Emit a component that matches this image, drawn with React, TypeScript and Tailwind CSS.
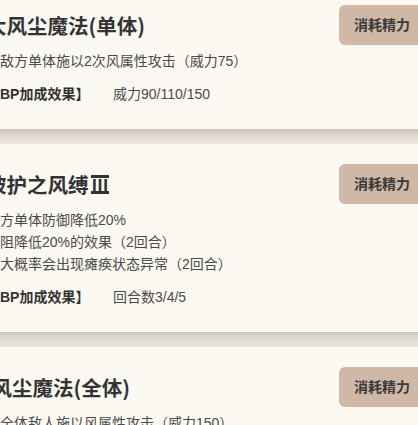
import React from "react";

type Card = {
  title: string;
  suffix?: string;
  titleShift?: boolean;
  lines: string[];
  bpValue: string;
};

const cards: Card[] = [
  {
    title: "大风尘魔法(单体)",
    lines: ["对敌方单体施以2次风属性攻击（威力75）"],
    bpValue: "威力90/110/150",
  },
  {
    title: "披护之风缚",
    suffix: "Ⅲ",
    lines: [
      "敌方单体防御降低20%",
      "风阻降低20%的效果（2回合）",
      "有大概率会出现瘫痪状态异常（2回合）",
    ],
    bpValue: "回合数3/4/5",
  },
  {
    title: "大风尘魔法(全体)",
    titleShift: true,
    lines: ["对全体敌人施以风属性攻击（威力150）"],
    bpValue: "威力180/220/300",
  },
];

const titleFont = { fontFamily: '"Noto Sans CJK SC", "Liberation Sans", sans-serif' };

function SkillCard({ card }: { card: Card }) {
  return (
    <div className="bg-[#fcf9f3] px-5 pt-5 pb-6">
      <div className="flex h-10 items-center justify-between">
        <div
          style={titleFont}
          className={
            card.titleShift
              ? "-ml-[15px] flex items-center text-[20.5px] font-bold leading-none text-[#333333]"
              : "flex items-center text-[20.5px] font-bold leading-none text-[#333333]"
          }
        >
          <span>{card.title}</span>
          {card.suffix && (
            <span className="ml-[2px] inline-block border-y-[3px] border-[#333333] px-[1px] text-[17px] leading-[13px] tracking-[-1px]">
              {card.suffix}
            </span>
          )}
        </div>
        <div className="flex h-10 items-center rounded-md bg-[#cfb8a5] px-[15px] text-[14px] font-bold text-[#3a3a3a]">
          消耗精力
        </div>
      </div>
      <div className="mt-[5px] text-[14px] leading-[22px] text-[#4a4a4a]">
        {card.lines.map((l) => (
          <div key={l}>{l}</div>
        ))}
      </div>
      <div className="mt-[11px] flex text-[14px] leading-[22px]">
        <div className="w-[127px] shrink-0 font-bold text-[#333333]">【BP加成效果】</div>
        <div className="text-[#4a4a4a]">{card.bpValue}</div>
      </div>
    </div>
  );
}

function Gap() {
  return <div className="h-[15px] bg-gradient-to-b from-[#cfc6b9] via-[#e2dbd0] to-[#ece7de]" />;
}

export default function App() {
  return (
    <div
      className="h-[425px] w-[418px] overflow-hidden bg-[#fcf9f3]"
      style={{ fontFamily: '"Liberation Sans", "Noto Sans CJK SC", sans-serif' }}
    >
      <div className="-ml-[34px] -mt-[15px] w-[479px]">
        <SkillCard card={cards[0]} />
        <Gap />
        <SkillCard card={cards[1]} />
        <Gap />
        <SkillCard card={cards[2]} />
      </div>
    </div>
  );
}
